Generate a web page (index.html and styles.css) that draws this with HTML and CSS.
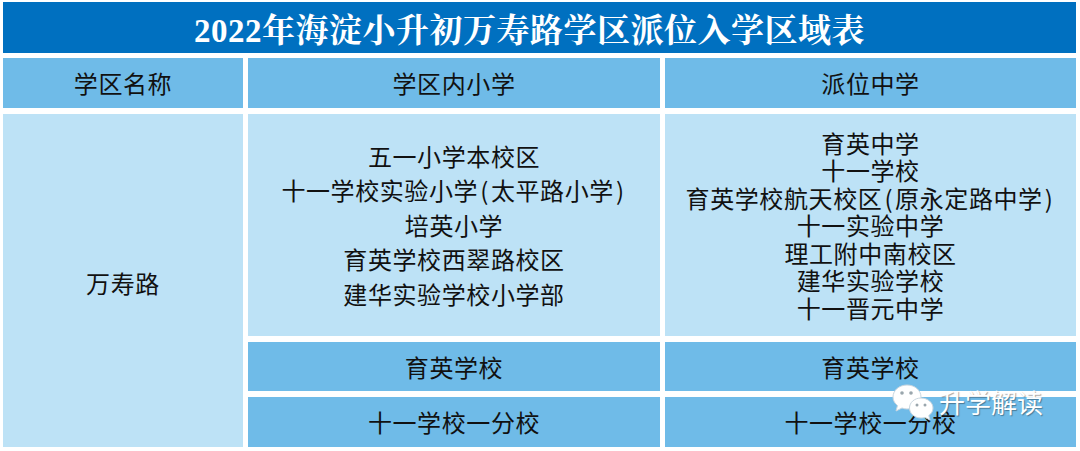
FILE: index.html
```html
<!DOCTYPE html>
<html lang="zh-CN">
<head>
<meta charset="utf-8">
<title>2022年海淀小升初万寿路学区派位入学区域表</title>
<link rel="stylesheet" href="styles.css">
</head>
<body>
<div class="page">
  <div class="title">2022年海淀小升初万寿路学区派位入学区域表</div>
  <div class="table">
    <div class="cell head">学区名称</div>
    <div class="cell head">学区内小学</div>
    <div class="cell head">派位中学</div>

    <div class="cell light name">万寿路</div>
    <div class="cell light list wide">
      <div>五一小学本校区</div>
      <div>十一学校实验小学<span class="paren">(</span>太平路小学<span class="paren">)</span></div>
      <div>培英小学</div>
      <div>育英学校西翠路校区</div>
      <div>建华实验学校小学部</div>
    </div>
    <div class="cell light list tight">
      <div>育英中学</div>
      <div>十一学校</div>
      <div>育英学校航天校区<span class="paren">(</span>原永定路中学<span class="paren">)</span></div>
      <div>十一实验中学</div>
      <div>理工附中南校区</div>
      <div>建华实验学校</div>
      <div>十一晋元中学</div>
    </div>

    <div class="cell head">育英学校</div>
    <div class="cell head">育英学校</div>
    <div class="cell head">十一学校一分校</div>
    <div class="cell head">十一学校一分校</div>
  </div>
  <div class="watermark">
    <svg class="wm-icon" width="46" height="44" viewBox="0 0 46 44">
      <path d="M16 2 C8 2 2 7.5 2 14 C2 17.5 3.8 20.5 6.5 22.6 L5 28 L11 25 C12.6 25.6 14.3 26 16 26 C24 26 30 20.5 30 14 C30 7.5 24 2 16 2 Z" fill="#ffffff" stroke="#c9d6df" stroke-width="1"/>
      <circle cx="11" cy="10" r="1.8" fill="#9aa6ad"/>
      <circle cx="20" cy="10" r="1.8" fill="#9aa6ad"/>
      <path d="M30 15 C23.5 15 18.5 19.5 18.5 25 C18.5 30.5 23.5 35 30 35 C31.4 35 32.7 34.8 34 34.4 L39 37 L37.8 32.5 C40.4 30.7 42 28 42 25 C42 19.5 36.5 15 30 15 Z" fill="#ffffff" stroke="#c9d6df" stroke-width="1"/>
      <circle cx="26" cy="22" r="1.5" fill="#9aa6ad"/>
      <circle cx="34" cy="22" r="1.5" fill="#9aa6ad"/>
    </svg>
    <span class="wm-text">升学解读</span>
  </div>
</div>
</body>
</html>
```

FILE: styles.css
```css
html, body {
  margin: 0;
  padding: 0;
  background: #ffffff;
}

.page {
  position: relative;
  width: 1080px;
  height: 451px;
  box-sizing: border-box;
  padding: 2px 4px 0 3px;
  font-family: "Noto Sans CJK SC", "Noto Sans", sans-serif;
  color: #111111;
}

.title {
  height: 51px;
  margin-bottom: 5px;
  background: #0070c0;
  color: #ffffff;
  display: flex;
  align-items: center;
  justify-content: center;
  font-family: "Liberation Serif", "Noto Serif CJK SC", "Noto Sans CJK SC", serif;
  font-weight: bold;
  font-size: 33px;
  letter-spacing: 0.5px;
  padding-right: 20px;
}

.table {
  display: grid;
  grid-template-columns: 240px 412px 411px;
  grid-template-rows: 50px 222px 49px 50px;
  column-gap: 5px;
  row-gap: 6px;
}

.cell {
  display: flex;
  align-items: center;
  justify-content: center;
  font-size: 24px;
  letter-spacing: 0.6px;
  line-height: 1;
  text-align: center;
}

.head {
  background: #6fbbe8;
}

.light {
  background: #bde2f6;
}

.name {
  grid-row: 2 / span 3;
  padding-top: 4px;
}

.list {
  flex-direction: column;
}

.wide > div {
  line-height: 34.5px;
}

.tight > div {
  line-height: 27.4px;
}

.tight {
  padding-top: 0;
}

.paren {
  margin: 0 2px;
}

.watermark {
  position: absolute;
  left: 891px;
  top: 383px;
  display: flex;
  align-items: center;
  gap: 2px;
}

.wm-icon {
  display: block;
}

.wm-text {
  font-family: "Noto Sans CJK SC", sans-serif;
  font-size: 26px;
  line-height: 1;
  color: #ffffff;
  text-shadow: 1px 1px 1px rgba(0, 0, 0, 0.35);
  margin-top: -6px;
}
```
